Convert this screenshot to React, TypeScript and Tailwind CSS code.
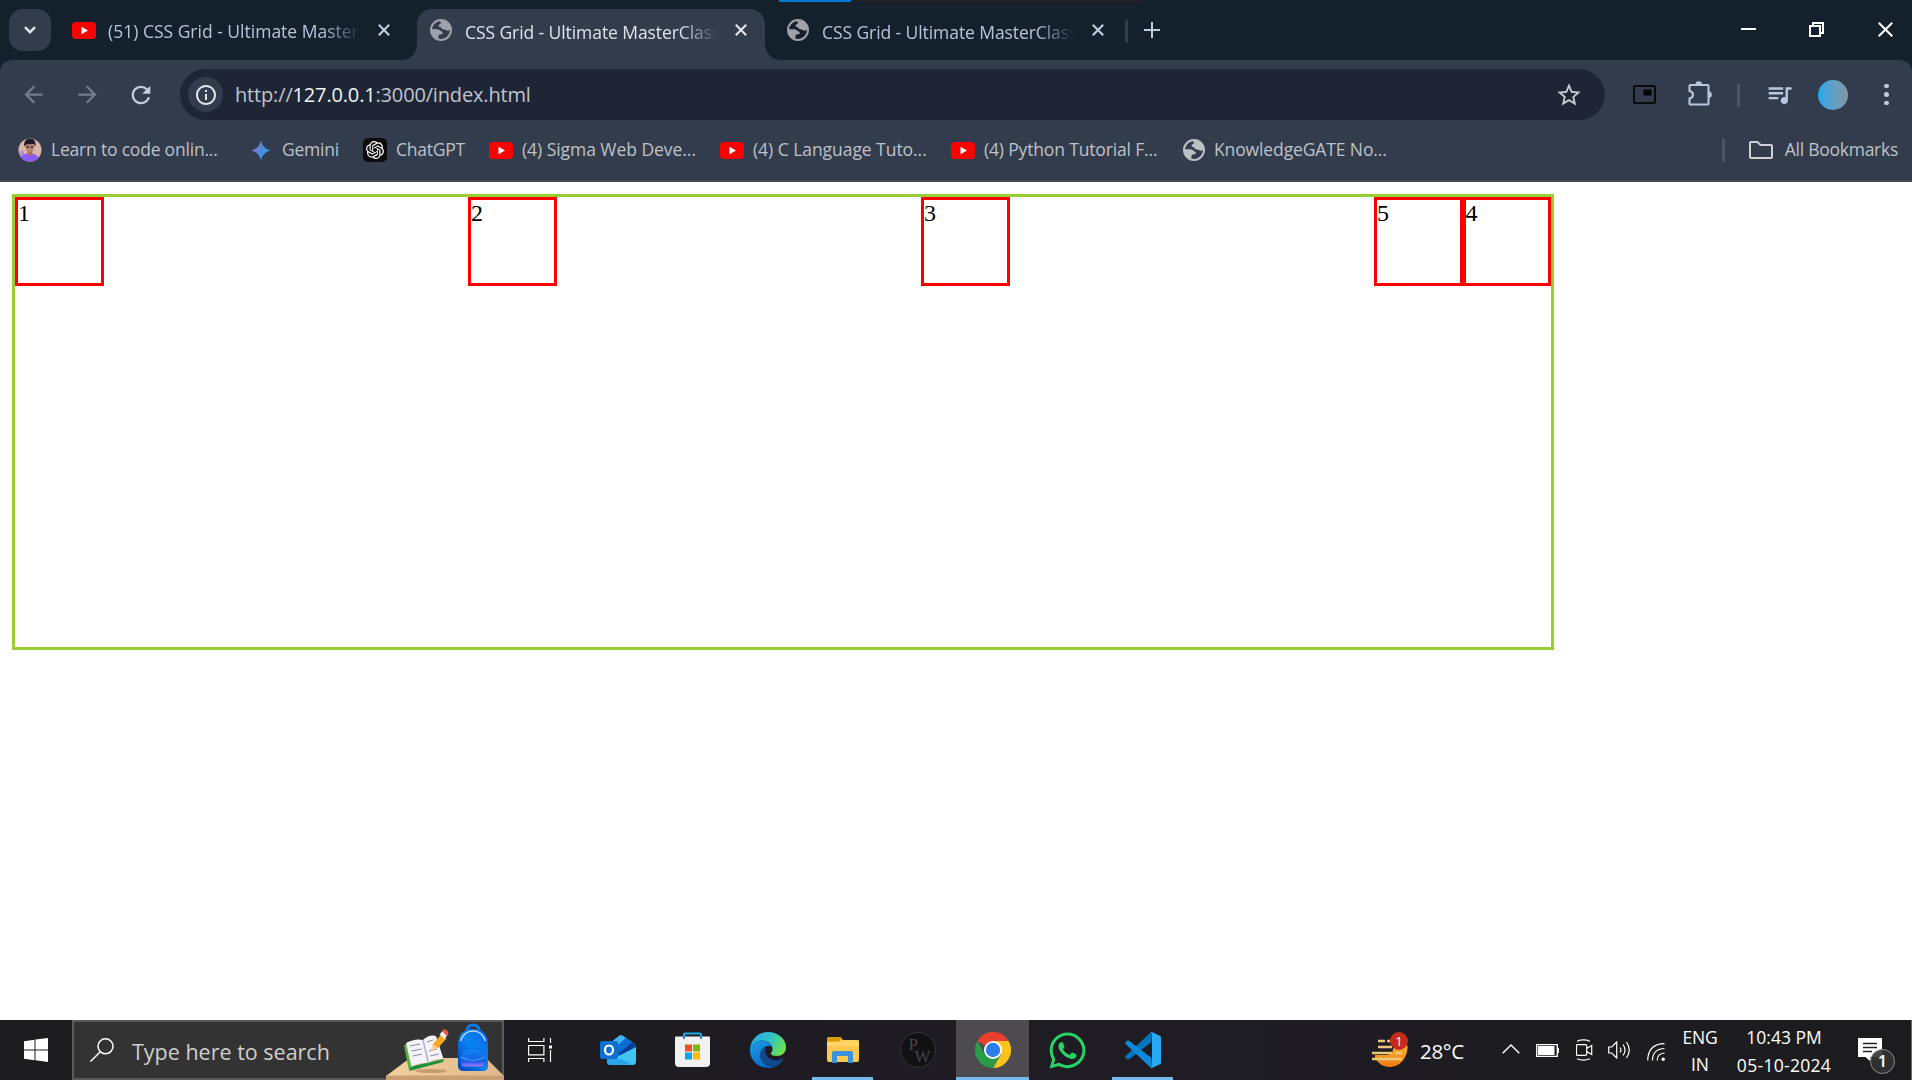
import type { ReactNode } from "react";
import {
  MdArrowBack,
  MdArrowForward,
  MdInfoOutline,
  MdQueueMusic,
  MdRefresh,
  MdStarBorder,
} from "react-icons/md";
import { SiOpenai } from "react-icons/si";
import { FaWhatsapp } from "react-icons/fa";

/* ---------- favicons and browser glyphs ---------- */

function YouTubeIcon() {
  return (
    <svg viewBox="0 0 24 17" className="block h-[17px] w-6 shrink-0">
      <rect width="24" height="17" rx="4" fill="#ff0000" />
      <path d="M9.5 4.8v7.4L16 8.5z" fill="#fff" />
    </svg>
  );
}

function GlobeIcon({ className }: { className: string }) {
  return (
    <svg viewBox="0 0 22 22" className={"block h-[22px] w-[22px] shrink-0 " + className}>
      <circle cx="11" cy="11" r="10" fill="none" stroke="currentColor" strokeWidth="2" />
      <path
        d="M10.5 2c-.6 1 .5 1.6.3 2.500-.2 1-1.800.6-2.200 1.700-.3.9.4 1.600 1.300 1.700 1.300.2 1.500 1.500 2.400 2.200 1 .7 2.700.3 3.700 1 .8.5 1.400 1 2.400.6 1.200-.5 2-1.400 2.200-2.200C20 5 16 1.500 10.500 2z"
        fill="currentColor"
      />
      <path
        d="M1.500 10.200h5.300c1.600 0 2.800.5 3.600 1.500.7.9 1.900.6 2.300 1.500.4 1-.2 1.900-1.200 2.100-1.300.3-2.600.1-2.900 1.200-.3 1.200.2 2.300-.9 3.400C3.800 18.500 1.400 14.500 1.500 10.200z"
        fill="currentColor"
      />
    </svg>
  );
}

function CloseGlyph({ className }: { className: string }) {
  return (
    <svg viewBox="0 0 12 12" className={"block h-3 w-3 shrink-0 " + className}>
      <path d="M.8.8l10.400 10.400M11.200.8L.8 11.200" stroke="currentColor" strokeWidth="2.100" />
    </svg>
  );
}

function LearnIcon() {
  return (
    <svg viewBox="0 0 24 24" className="block h-6 w-6 shrink-0">
      <defs>
        <clipPath id="avatar">
          <circle cx="12" cy="12" r="11.500" />
        </clipPath>
      </defs>
      <g clipPath="url(#avatar)">
        <rect width="24" height="24" fill="#dcb4a6" />
        <path d="M0 13h6v7H0z" fill="#b98fd0" />
        <path d="M2 24c0-6 3-8.500 9-8.500s11 2.500 11 8.500z" fill="#8c5cf5" />
        <path d="M9.500 13h5l-.5 4.500h-4z" fill="#a86e66" />
        <ellipse cx="11.800" cy="9.500" rx="4" ry="5" fill="#b98074" />
        <path d="M6.300 8.500C5.500 3 8.500.5 12 .5s6.500 2.500 5.300 8l-1.800-2.500-6.500.2z" fill="#221a26" />
        <path d="M8 9h3M12.500 9h3" stroke="#4a3038" strokeWidth="1.400" />
      </g>
    </svg>
  );
}

function GeminiIcon() {
  return (
    <svg viewBox="0 0 20 20" className="block h-[21px] w-5 shrink-0">
      <defs>
        <linearGradient id="gem" x1="0" x2="1" y1=".3" y2=".7">
          <stop offset="0" stopColor="#9b72cb" />
          <stop offset=".4" stopColor="#5a86d6" />
          <stop offset="1" stopColor="#1ba1e3" />
        </linearGradient>
      </defs>
      <path d="M10 0c1.200 5.500 4.500 8.800 10 10-5.500 1.200-8.800 4.500-10 10-1.200-5.500-4.500-8.800-10-10C5.500 8.800 8.800 5.500 10 0z" fill="url(#gem)" />
    </svg>
  );
}

function ChatGptIcon() {
  return (
    <span className="flex h-6 w-6 shrink-0 items-center justify-center rounded-[5px] bg-[#0c0c0c] text-white">
      <SiOpenai size={18} />
    </span>
  );
}

/* ---------- tab strip ---------- */

function TabTitle({ children, className }: { children: ReactNode; className: string }) {
  return (
    <span
      className={
        "block overflow-hidden whitespace-nowrap text-[17.5px] leading-6 [mask-image:linear-gradient(to_right,#000_calc(100%-38px),transparent)] " +
        className
      }
    >
      {children}
    </span>
  );
}

function TabStrip() {
  return (
    <div className="relative flex h-[60px] items-start bg-[#15202d] pt-[9px] pl-[9px]">
      <button className="flex h-[42px] w-[42px] shrink-0 items-center justify-center rounded-[14px] bg-[#323c4d]">
        <svg viewBox="0 0 12 8" className="h-2 w-3">
          <path d="M1 1.200l5 5 5-5" fill="none" stroke="#e3e5ee" strokeWidth="2.400" />
        </svg>
      </button>

      <div className="flex h-[42px] w-[366px] shrink-0 items-center pl-[21px]">
        <YouTubeIcon />
        <TabTitle className="mt-px ml-3 w-[253px] text-[#b9c3dc]">(51) CSS Grid - Ultimate MasterClass</TabTitle>
        <CloseGlyph className="ml-[17px] text-[#c3cbe0]" />
      </div>

      <div className="relative flex h-[51px] w-[348px] shrink-0 items-start rounded-t-[15px] bg-[#323c4d] pt-2.5 pl-[13px]">
        <span className="absolute bottom-0 -left-[15px] h-[15px] w-[15px] bg-[radial-gradient(circle_at_0_0,transparent_14.500px,#323c4d_15px)]" />
        <span className="absolute -right-[15px] bottom-0 h-[15px] w-[15px] bg-[radial-gradient(circle_at_100%_0,transparent_14.500px,#323c4d_15px)]" />
        <GlobeIcon className="text-[#9fa2a8]" />
        <TabTitle className="mt-px ml-[13px] w-[253px] tracking-[-0.08px] text-[#dfe2ea]">CSS Grid - Ultimate MasterClass</TabTitle>
        <CloseGlyph className="mt-[5px] ml-[17px] text-[#e6e8ef]" />
      </div>

      <div className="flex h-[51px] w-[360px] shrink-0 items-start pt-2.5 pl-[22px]">
        <GlobeIcon className="text-[#9fa2a8]" />
        <TabTitle className="mt-px ml-[13px] w-[253px] tracking-[-0.08px] text-[#b9c3dc]">CSS Grid - Ultimate MasterClass</TabTitle>
        <CloseGlyph className="mt-[5px] ml-[17px] text-[#c3cbe0]" />
      </div>

      <span className="mt-2.5 h-6 w-[3px] rounded-full bg-[#323c4d]" />
      <svg viewBox="0 0 16 16" className="mt-[13px] ml-4 h-4 w-4">
        <path d="M8 0v16M0 8h16" stroke="#c3cbe0" strokeWidth="2" />
      </svg>

      <div className="mt-[13px] mr-[19px] ml-auto flex items-center">
        <svg viewBox="0 0 15 15" className="h-[15px] w-[15px]">
          <path d="M0 7h15" stroke="#fff" strokeWidth="2" />
        </svg>
        <svg viewBox="0 0 15 15" className="ml-[53px] h-[15px] w-[15px]">
          <path d="M1 4h10v10H1zM4 4V1h10v10h-3" fill="none" stroke="#fff" strokeWidth="2" />
        </svg>
        <svg viewBox="0 0 15 15" className="ml-[54px] h-[15px] w-[15px]">
          <path d="M.7.7l13.600 13.600M14.300.7L.7 14.300" stroke="#fff" strokeWidth="2" />
        </svg>
      </div>

      <span className="absolute top-0 left-[779px] flex h-0.5 w-[362px] bg-[#222020]">
        <span className="h-full w-[72px] bg-[#0078d7]" />
      </span>
    </div>
  );
}

/* ---------- address row ---------- */

function PipIcon() {
  return (
    <svg viewBox="0 0 23 19" className="h-[19px] w-[23px]">
      <rect x="1" y="1" width="21" height="17" rx="1" fill="none" stroke="#0a0b0d" strokeWidth="2" />
      <rect x="10.500" y="4.500" width="8" height="6" fill="#050505" />
    </svg>
  );
}

function PuzzleIcon() {
  return (
    <svg viewBox="0 0 24 25" className="h-[25px] w-6">
      <path
        d="M2.500 4h17q1 0 1 1v17.500q0 1-1 1h-17q-1 0-1-1v-5q3.500-1 3.500-3.800T1.500 10V5q0-1 1-1z"
        fill="none"
        stroke="#bcc5de"
        strokeWidth="2.100"
      />
      <path d="M7.500 3.500a3.200 3.200 0 0 1 6.400 0zM20.500 10.500a3.300 3.300 0 0 1 0 6.600z" fill="#bcc5de" />
    </svg>
  );
}

function AddressRow() {
  return (
    <div className="flex h-[69px] items-center rounded-t-xl bg-[#323c4d]">
      <MdArrowBack size={27} className="ml-5 text-[#757c89]" />
      <MdArrowForward size={27} className="ml-[27px] text-[#757c89]" />
      <MdRefresh size={28} className="ml-[26px] text-[#c3cbe0]" />

      <div className="ml-[25px] flex h-[51px] w-[1425px] items-center rounded-full bg-[#1e2636] pl-2">
        <span className="flex h-[35px] w-[35px] items-center justify-center rounded-full bg-[#323c4d]">
          <MdInfoOutline size={24} className="text-[#e3e5ea]" />
        </span>
        <span className="ml-3 text-[20px] tracking-[-0.16px] text-[#c0c4cd]">
          http://<span className="text-[#f2f4f8]">127.0.0.1</span>:3000/index.html
        </span>
        <MdStarBorder size={28} className="mr-[22px] ml-auto text-[#c9cacf]" />
      </div>

      <div className="ml-7 flex items-center">
        <PipIcon />
        <span className="ml-8 -mt-0.5">
          <PuzzleIcon />
        </span>
        <span className="ml-[25px] h-6 w-[3px] rounded-full bg-[#4b5567]" />
        <MdQueueMusic size={29} className="ml-[25px] text-[#bcc5de]" />
        <span className="ml-[24px] h-[30px] w-[30px] rounded-full bg-linear-to-r from-[#16a9ee] to-[#8195a0]" />
      </div>
      <div className="ml-9 flex flex-col gap-1">
        <span className="h-[4.500px] w-[4.500px] rounded-full bg-[#c3cbe0]" />
        <span className="h-[4.500px] w-[4.500px] rounded-full bg-[#c3cbe0]" />
        <span className="h-[4.500px] w-[4.500px] rounded-full bg-[#c3cbe0]" />
      </div>
    </div>
  );
}

/* ---------- bookmarks ---------- */

function Bookmark({ icon, label, className, labelClass }: { icon: ReactNode; label: string; className: string; labelClass: string }) {
  return (
    <div className={"flex h-full shrink-0 items-center " + className}>
      {icon}
      <span className={"mb-0.5 whitespace-nowrap text-[17.5px] " + labelClass}>{label}</span>
    </div>
  );
}

function BookmarksBar() {
  return (
    <div className="h-[53px] border-b-2 border-[#46484c] bg-[#323c4d] text-[#bec1c7]">
      <div className="flex h-[42px] items-center pl-[18px]">
        <Bookmark className="w-[233px]" icon={<LearnIcon />} label="Learn to code onlin..." labelClass="ml-[9px] tracking-[-0.2px]" />
        <Bookmark className="w-28" icon={<GeminiIcon />} label="Gemini" labelClass="ml-[11px] tracking-[-0.25px]" />
        <Bookmark className="w-[126px]" icon={<ChatGptIcon />} label="ChatGPT" labelClass="ml-[9px] tracking-[-0.25px]" />
        <Bookmark className="w-[231px]" icon={<YouTubeIcon />} label="(4) Sigma Web Deve..." labelClass="ml-[9px] tracking-[-0.05px]" />
        <Bookmark className="w-[231px]" icon={<YouTubeIcon />} label="(4) C Language Tuto..." labelClass="ml-[9px] tracking-[-0.05px]" />
        <Bookmark className="w-[232px]" icon={<YouTubeIcon />} label="(4) Python Tutorial F..." labelClass="ml-[9px] tracking-[-0.16px]" />
        <Bookmark className="" icon={<GlobeIcon className="text-[#bfc0c3]" />} label="KnowledgeGATE No..." labelClass="ml-[9px] tracking-[-0.12px]" />
        <div className="mr-3.5 ml-auto flex items-center">
          <span className="h-6 w-[3px] rounded-full bg-[#4b5567]" />
          <svg viewBox="0 0 24 18" className="ml-6 h-[18px] w-6">
            <path d="M2 1h6.500l3 3H22q1 0 1 1v11q0 1-1 1H2q-1 0-1-1V2q0-1 1-1z" fill="none" stroke="#cfd0d4" strokeWidth="2" />
          </svg>
          <span className="mb-0.5 ml-3 text-[17.5px] tracking-[-0.26px] whitespace-nowrap">All Bookmarks</span>
        </div>
      </div>
    </div>
  );
}

/* ---------- page ---------- */

function Box({ children }: { children: ReactNode }) {
  return (
    <div className="h-[89px] w-[88.500px] border-3 border-[#ff0000] bg-white font-['Liberation_Serif',serif] text-2xl leading-[27px] text-black">
      {children}
    </div>
  );
}

function PageContent() {
  return (
    <main className="flex-1 bg-white pt-3 pl-3">
      <div className="flex h-[456px] w-[1542px] items-start justify-between border-3 border-[#9acd32]">
        <Box>1</Box>
        <Box>2</Box>
        <Box>3</Box>
        <div className="flex">
          <Box>5</Box>
          <Box>4</Box>
        </div>
      </div>
    </main>
  );
}

/* ---------- taskbar ---------- */

function SearchArt() {
  return (
    <svg viewBox="0 0 118 58" className="h-[58px] w-[118px] shrink-0">
      <defs>
        <linearGradient id="desk" x1="0" x2="1">
          <stop offset="0" stopColor="#f3cf9e" />
          <stop offset="1" stopColor="#dfb88b" />
        </linearGradient>
        <linearGradient id="pack" x1="0" x2="1" y1="1" y2="0">
          <stop offset="0" stopColor="#0040b8" />
          <stop offset=".5" stopColor="#0a84f0" />
          <stop offset="1" stopColor="#0568ea" />
        </linearGradient>
        <linearGradient id="pocket" x1="0" x2="0" y1="0" y2="1">
          <stop offset="0" stopColor="#0d8af5" />
          <stop offset=".7" stopColor="#1a5ae8" />
          <stop offset="1" stopColor="#b07cf5" />
        </linearGradient>
      </defs>
      <path d="M0 54l24-18h76l18 18z" fill="url(#desk)" />
      <path d="M0 53.500h118V58H0z" fill="#c9a074" />
      <ellipse cx="45" cy="49" rx="16" ry="2" fill="#c99b70" />
      <path d="M18 24l5.500 25L57 40l1-3-31 7z" fill="#1f8f3f" />
      <path d="M18 23l3-1 5 22-3 4z" fill="#57b63b" />
      <path d="M20 21q9-5 17-3 6-6 13-4l7.500 23q-9-1-15 4-9-1-17 4z" fill="#f5f3fa" />
      <path d="M37 18l5.500 23" stroke="#b8b0cf" strokeWidth="1.500" />
      <path d="M24 24l10-2M25.500 29l10-2M27 34l9-2M41 20l6-2M43 29l8-2M44 34l9-2" stroke="#8a86a0" strokeWidth="1" />
      <path d="M45 29l2-7 8.500-10 5 4.500-8.500 9.500z" fill="#f9a825" />
      <path d="M47 22l5 4-7 3z" fill="#f4cfa0" />
      <path d="M53.500 12.500l3-3.500 5 4-3 4z" fill="#f0e7e8" />
      <path d="M56 9q2-3 5-.5t0 5.500z" fill="#ee5348" />
      <path d="M81 9q0-6 6-6t6 6" fill="none" stroke="#0879e4" strokeWidth="3" />
      <path d="M72 23Q72 7 87 7t15 16v21q0 5-5 5H78q-6 0-6-5z" fill="url(#pack)" />
      <path d="M74.500 19Q78 9 87 9t12.500 10" fill="none" stroke="#b8d8ff" strokeWidth="1.500" />
      <path d="M75 37q0-11 12-11t12 11v4q0 4-4 4H79q-4 0-4-4z" fill="url(#pocket)" stroke="#0a6be0" />
      <path d="M75 35q12 7 24 0" fill="none" stroke="#38a5ff" strokeWidth="1.200" />
    </svg>
  );
}

function OutlookIcon() {
  return (
    <svg viewBox="0 0 36 30" className="h-[30px] w-9">
      <path d="M7 10L19 1q2-1.500 4 0l11 7q2 1.500 2 4v14q0 4-4 4H11q-4 0-4-4z" fill="#1c8fe0" />
      <path d="M9 9L19 1q2-1.500 4 0l3 2-13 10z" fill="#42b6f2" />
      <path d="M14 14L26 3l6 4-14 12z" fill="#0a6ed1" />
      <path d="M18 19L32 7q4 2 4 5L21 23z" fill="#0a3e96" />
      <path d="M7 27l29-15v14q0 4-4 4H11q-3 0-4-3z" fill="#3fc6f5" />
      <path d="M7 24l8 0 6 0 12 5.500-22 .5q-4 0-4-4z" fill="#2aa4ea" />
      <rect x="0" y="6" width="18" height="18" rx="2" fill="#0f6fd0" />
      <ellipse cx="9" cy="15" rx="4" ry="4.500" fill="none" stroke="#fff" strokeWidth="2.200" />
    </svg>
  );
}

function StoreIcon() {
  return (
    <svg viewBox="0 0 35 36" className="h-9 w-[35px]">
      <path d="M9 9V2.500q0-1 1-1h15q1 0 1 1V9" fill="none" stroke="#1ba9ea" strokeWidth="2" />
      <path d="M1 4.500h33q1 0 1 1V31q0 4-4 4H4q-4 0-4-4V5.500q0-1 1-1z" fill="#f1f1f1" />
      <path d="M9 4v3M26 4v3" stroke="#1b8fd4" strokeWidth="2" />
      <path d="M10 12.500h7v7h-7z" fill="#f25022" />
      <path d="M18 12.500h7v7h-7z" fill="#7fba00" />
      <path d="M10 20.500h7v7h-7z" fill="#00a4ef" />
      <path d="M18 20.500h7v7h-7z" fill="#ffb900" />
    </svg>
  );
}

function EdgeIcon() {
  return (
    <svg viewBox="0 0 36 36" className="h-9 w-9">
      <defs>
        <linearGradient id="edgeTop" x1="0" x2="1" y1=".2" y2=".6">
          <stop offset="0" stopColor="#2ba5e2" />
          <stop offset=".5" stopColor="#2fc2c8" />
          <stop offset="1" stopColor="#6de24c" />
        </linearGradient>
        <linearGradient id="edgeLow" x1="0" x2=".6" y1="0" y2="1">
          <stop offset="0" stopColor="#1b9de2" />
          <stop offset="1" stopColor="#0b6bd0" />
        </linearGradient>
      </defs>
      <path d="M0 17C1 7 8 0 18 0c10 0 18 7 18 15 0 6-4 9-9 9-4 0-6.500-1-6-3 .5-1 1.500-2 1.500-4C22.500 12 18 8.500 12 8.500 6 8.500 1 12 0 17z" fill="url(#edgeTop)" />
      <path d="M0 18C0 12 5 8.500 12 8.500c5 0 9 2.500 10 6-6-2-11 2-11 8 0 7 6 12 12 13C11 38 0 30 0 18z" fill="url(#edgeLow)" />
      <path d="M15 15c-4 2-5 5-5 8 0 7 6 12 13 12.500 4-1 8-4 10-7.500.5-1 0-1.500-1-1-7 3-15 0-16.500-6-.5-2-.5-4-.5-6z" fill="#114a8b" />
    </svg>
  );
}

function ExplorerIcon() {
  return (
    <svg viewBox="0 0 32 27" className="h-[27px] w-8">
      <path d="M0 2q0-2 2-2h11l3 3h14q2 0 2 2v18q0 2-2 2H2q-2 0-2-2z" fill="#fcc94d" />
      <path d="M0 5V2q0-2 2-2h11q3 1 1 3-1 1.500-3 1.500H0z" fill="#dd9c07" />
      <path d="M0 5h11l4-1.500h17V9H0z" fill="#ffd666" />
      <path d="M5 26V16q0-2 2-2h17q2 0 2 2v10h-5v-7H10v7z" fill="#3a93dd" />
    </svg>
  );
}

function PwIcon() {
  return (
    <span className="flex h-9 w-9 flex-col items-start rounded-full border border-[#35343a] bg-[#121214] pt-1.5 pl-2 font-['Liberation_Serif',serif] text-[17px] leading-3 text-[#46454b]">
      <span>P</span>
      <span className="ml-1.5">W</span>
    </span>
  );
}

function ChromeIcon() {
  return (
    <svg viewBox="0 0 36 36" className="h-9 w-9">
      <path d="M18 18L2.410 9A18 18 0 0 1 33.590 9z" fill="#e8402f" />
      <path d="M18 9h15.590A18 18 0 0 1 18 36l7.800-13.500z" fill="#fcc31e" />
      <path d="M10.200 22.500L2.410 9A18 18 0 0 0 18 36l7.800-13.500z" fill="#2a9b48" />
      <circle cx="18" cy="18" r="9" fill="#fff" />
      <circle cx="18" cy="18" r="7.200" fill="#2b7de9" />
    </svg>
  );
}

function VsCodeIcon() {
  return (
    <svg viewBox="0 0 36 36" className="h-9 w-9">
      <path d="M26 10.500L4 27.200q-1 .7-2 0l-1.400-1.300q-1-1 0-2L25 1q1-1 2-.9z" fill="#0474bc" />
      <path d="M26 25.500L4 8.800q-1-.7-2 0L.6 10.100q-1 1 0 2L25 35q1 1 2 .9z" fill="#0a8ad8" />
      <path d="M25.500.8q.8-1 2-.6L35 3.800q1 .5 1 1.600v25.200q0 1.100-1 1.600l-7.500 3.600q-1.200.4-2-.6 1.500.6 1.500-1.200V2q0-1.800-1.500-1.200z" fill="#27a9f3" />
    </svg>
  );
}

function TaskApp({ children, state = "idle" }: { children: ReactNode; state?: "idle" | "open" | "active" }) {
  return (
    <div className="flex h-[60px] w-[75px] shrink-0 flex-col items-center">
      <div className={"flex h-[57px] w-[73px] items-center justify-center pt-[3px] " + (state === "active" ? "bg-[#4d4b50]" : "")}>
        {children}
      </div>
      {state === "open" && <span className="h-[3px] w-[61px] bg-[#76b9ed]" />}
      {state === "active" && <span className="h-[3px] w-[73px] bg-[#76b9ed]" />}
    </div>
  );
}

function WeatherIcon() {
  return (
    <div className="relative h-9 w-9">
      <svg viewBox="0 0 36 36" className="h-9 w-9">
        <defs>
          <linearGradient id="sun" x1="0" x2="0" y1="0" y2="1">
            <stop offset="0" stopColor="#f9b63a" />
            <stop offset="1" stopColor="#ef7a12" />
          </linearGradient>
        </defs>
        <path d="M3 23h12q6-1 6-6l3-6 11.500 2.500C36 26 28 35 17.500 35 11 35 6 31 3 26z" fill="url(#sun)" />
        <path d="M6 9h7M15 9h3M6 15h14M0 21h20M23 21h7M0 27h30" stroke="#e9c978" strokeWidth="2.600" />
      </svg>
      <span className="absolute top-0 left-[18px] flex h-[18px] w-[18px] items-center justify-center rounded-full bg-[#c42b1c] text-[13px] leading-none text-white">
        1
      </span>
    </div>
  );
}

function Tray() {
  return (
    <div className="ml-auto flex h-full items-center text-white">
      <WeatherIcon />
      <span className="mt-0.5 ml-3 w-[82px] text-[20.500px] tracking-[-0.3px]">28°C</span>
      <svg viewBox="0 0 18 10" className="-mt-0.5 h-2.5 w-[18px]">
        <path d="M.7 9.300L9 1l8.300 8.300" fill="none" stroke="#fff" strokeWidth="1.400" />
      </svg>
      <svg viewBox="0 0 23 13" className="ml-4 h-[13px] w-[23px]">
        <path d="M.7.700h20.600v11.600H.7z" fill="none" stroke="#fff" strokeWidth="1.300" />
        <path d="M2 2h16.500v9H2zM21.500 4H23v5h-1.500z" fill="#fff" />
      </svg>
      <svg viewBox="0 0 17 22" className="ml-[17px] h-[22px] w-[17px]">
        <path d="M1.500 5.700h8q1.200 0 1.200 1.200v8.200q0 1.200-1.200 1.200h-8q-1 0-1-1.200V6.900q0-1.200 1-1.200zM10.700 9.500l5-3v9l-5-3M1 2.200q6.500-2.800 13 0M1 19.800q6.500 2.800 13 0" fill="none" stroke="#fff" strokeWidth="1.200" />
      </svg>
      <svg viewBox="0 0 23 18" className="ml-[15px] h-[18px] w-[23px]">
        <path d="M.7 6h3l5-5v16l-5-5h-3zM12 6.500q2 2.500 0 5M15 3.500q4 5.500 0 11M18.500 1q5.500 8 0 16" fill="none" stroke="#fff" strokeWidth="1.200" />
      </svg>
      <svg viewBox="0 0 18 18" className="mt-1 ml-4 h-[18px] w-[18px]">
        <path d="M.7 17.500Q1 1 17.500.700M5.500 17.500Q5.500 6 17.500 5.500M10.200 17.500q0-7 7.300-7.500" fill="none" stroke="#fff" strokeWidth="1.200" />
        <circle cx="16.200" cy="16.200" r="1.700" fill="#fff" />
      </svg>
      <div className="mt-0.5 ml-[17px] flex w-9 flex-col items-center text-[17.500px] leading-[27px]">
        <span className="tracking-[-0.2px]">ENG</span>
        <span>IN</span>
      </div>
      <div className="mt-[3px] ml-[17px] flex w-[98px] flex-col items-center text-[17.500px] leading-[28px]">
        <span className="-mt-0.5">10:43 PM</span>
        <span className="tracking-[0.300px]">05-10-2024</span>
      </div>
      <div className="relative mt-[13px] mr-4 ml-[25px] h-[37px] w-[37px]">
        <svg viewBox="0 0 24 24" className="h-6 w-6">
          <path d="M0 0h24v19H12.500v4.500L7.500 19H0z" fill="#fff" />
          <path d="M5 5.500h14M5 9.500h14M5 13.500h9" stroke="#222" strokeWidth="1.400" />
        </svg>
        <span className="absolute top-[11px] left-[12px] flex h-[25px] w-[25px] items-center justify-center rounded-full border border-[#8b8b8b] bg-[#333]/90 text-[16.500px] leading-none font-semibold text-white">
          1
        </span>
      </div>
      <span className="h-full w-px bg-[#6c6c6c]" />
    </div>
  );
}

function Taskbar() {
  return (
    <footer className="flex h-[60px] items-center bg-linear-to-r from-[#1c1c1e] via-[#1f1c24] via-60% to-[#1c1c1e]">
      <div className="flex w-[72px] shrink-0 justify-center">
        <svg viewBox="0 0 24 24" className="h-6 w-6">
          <path d="M0 3.300l10.500-1.500v9.700H0zM11.500 1.600L24 0v11.500H11.500zM0 12.500h10.500v9.700L0 20.700zM11.500 12.500H24V24l-12.500-1.700z" fill="#fff" />
        </svg>
      </div>
      <div className="flex h-[60px] w-[432px] shrink-0 items-center border-2 border-[#5b5b5b] bg-[#333333] pl-4">
        <svg viewBox="0 0 24 24" className="h-6 w-6">
          <path d="M.5 23.500l9.300-9.300" stroke="#fff" strokeWidth="1.500" />
          <circle cx="15.500" cy="8.300" r="7.500" fill="none" stroke="#fff" strokeWidth="1.500" />
        </svg>
        <span className="mt-1 ml-[18px] text-[21.500px] whitespace-nowrap text-[#cfcfcf]">Type here to search</span>
        <span className="-mr-0.5 mb-[-2px] ml-auto">
          <SearchArt />
        </span>
      </div>
      <div className="flex w-[76px] shrink-0 pl-6">
        <svg viewBox="0 0 24 24" className="h-6 w-6">
          <path d="M.6 7.500h15.300v9.300H.6zM.6 0v3.500h15.300V0M.6 24v-3.500h15.300V24M22.500 0v5M22.500 12v12" fill="none" stroke="#fff" strokeWidth="1.200" />
          <path d="M21 7.500h3v3h-3z" fill="#fff" />
        </svg>
      </div>
      <TaskApp><OutlookIcon /></TaskApp>
      <TaskApp><StoreIcon /></TaskApp>
      <TaskApp><EdgeIcon /></TaskApp>
      <TaskApp state="open"><ExplorerIcon /></TaskApp>
      <TaskApp><PwIcon /></TaskApp>
      <TaskApp state="active"><ChromeIcon /></TaskApp>
      <TaskApp><FaWhatsapp size={41} className="text-[#25d366]" /></TaskApp>
      <TaskApp state="open"><VsCodeIcon /></TaskApp>
      <Tray />
    </footer>
  );
}

export default function App() {
  return (
    <div className="flex h-[1080px] w-[1912px] flex-col overflow-hidden bg-white font-['Open_Sans','Noto_Sans',sans-serif]">
      <TabStrip />
      <div className="bg-[#15202d]">
        <AddressRow />
      </div>
      <BookmarksBar />
      <PageContent />
      <Taskbar />
    </div>
  );
}
